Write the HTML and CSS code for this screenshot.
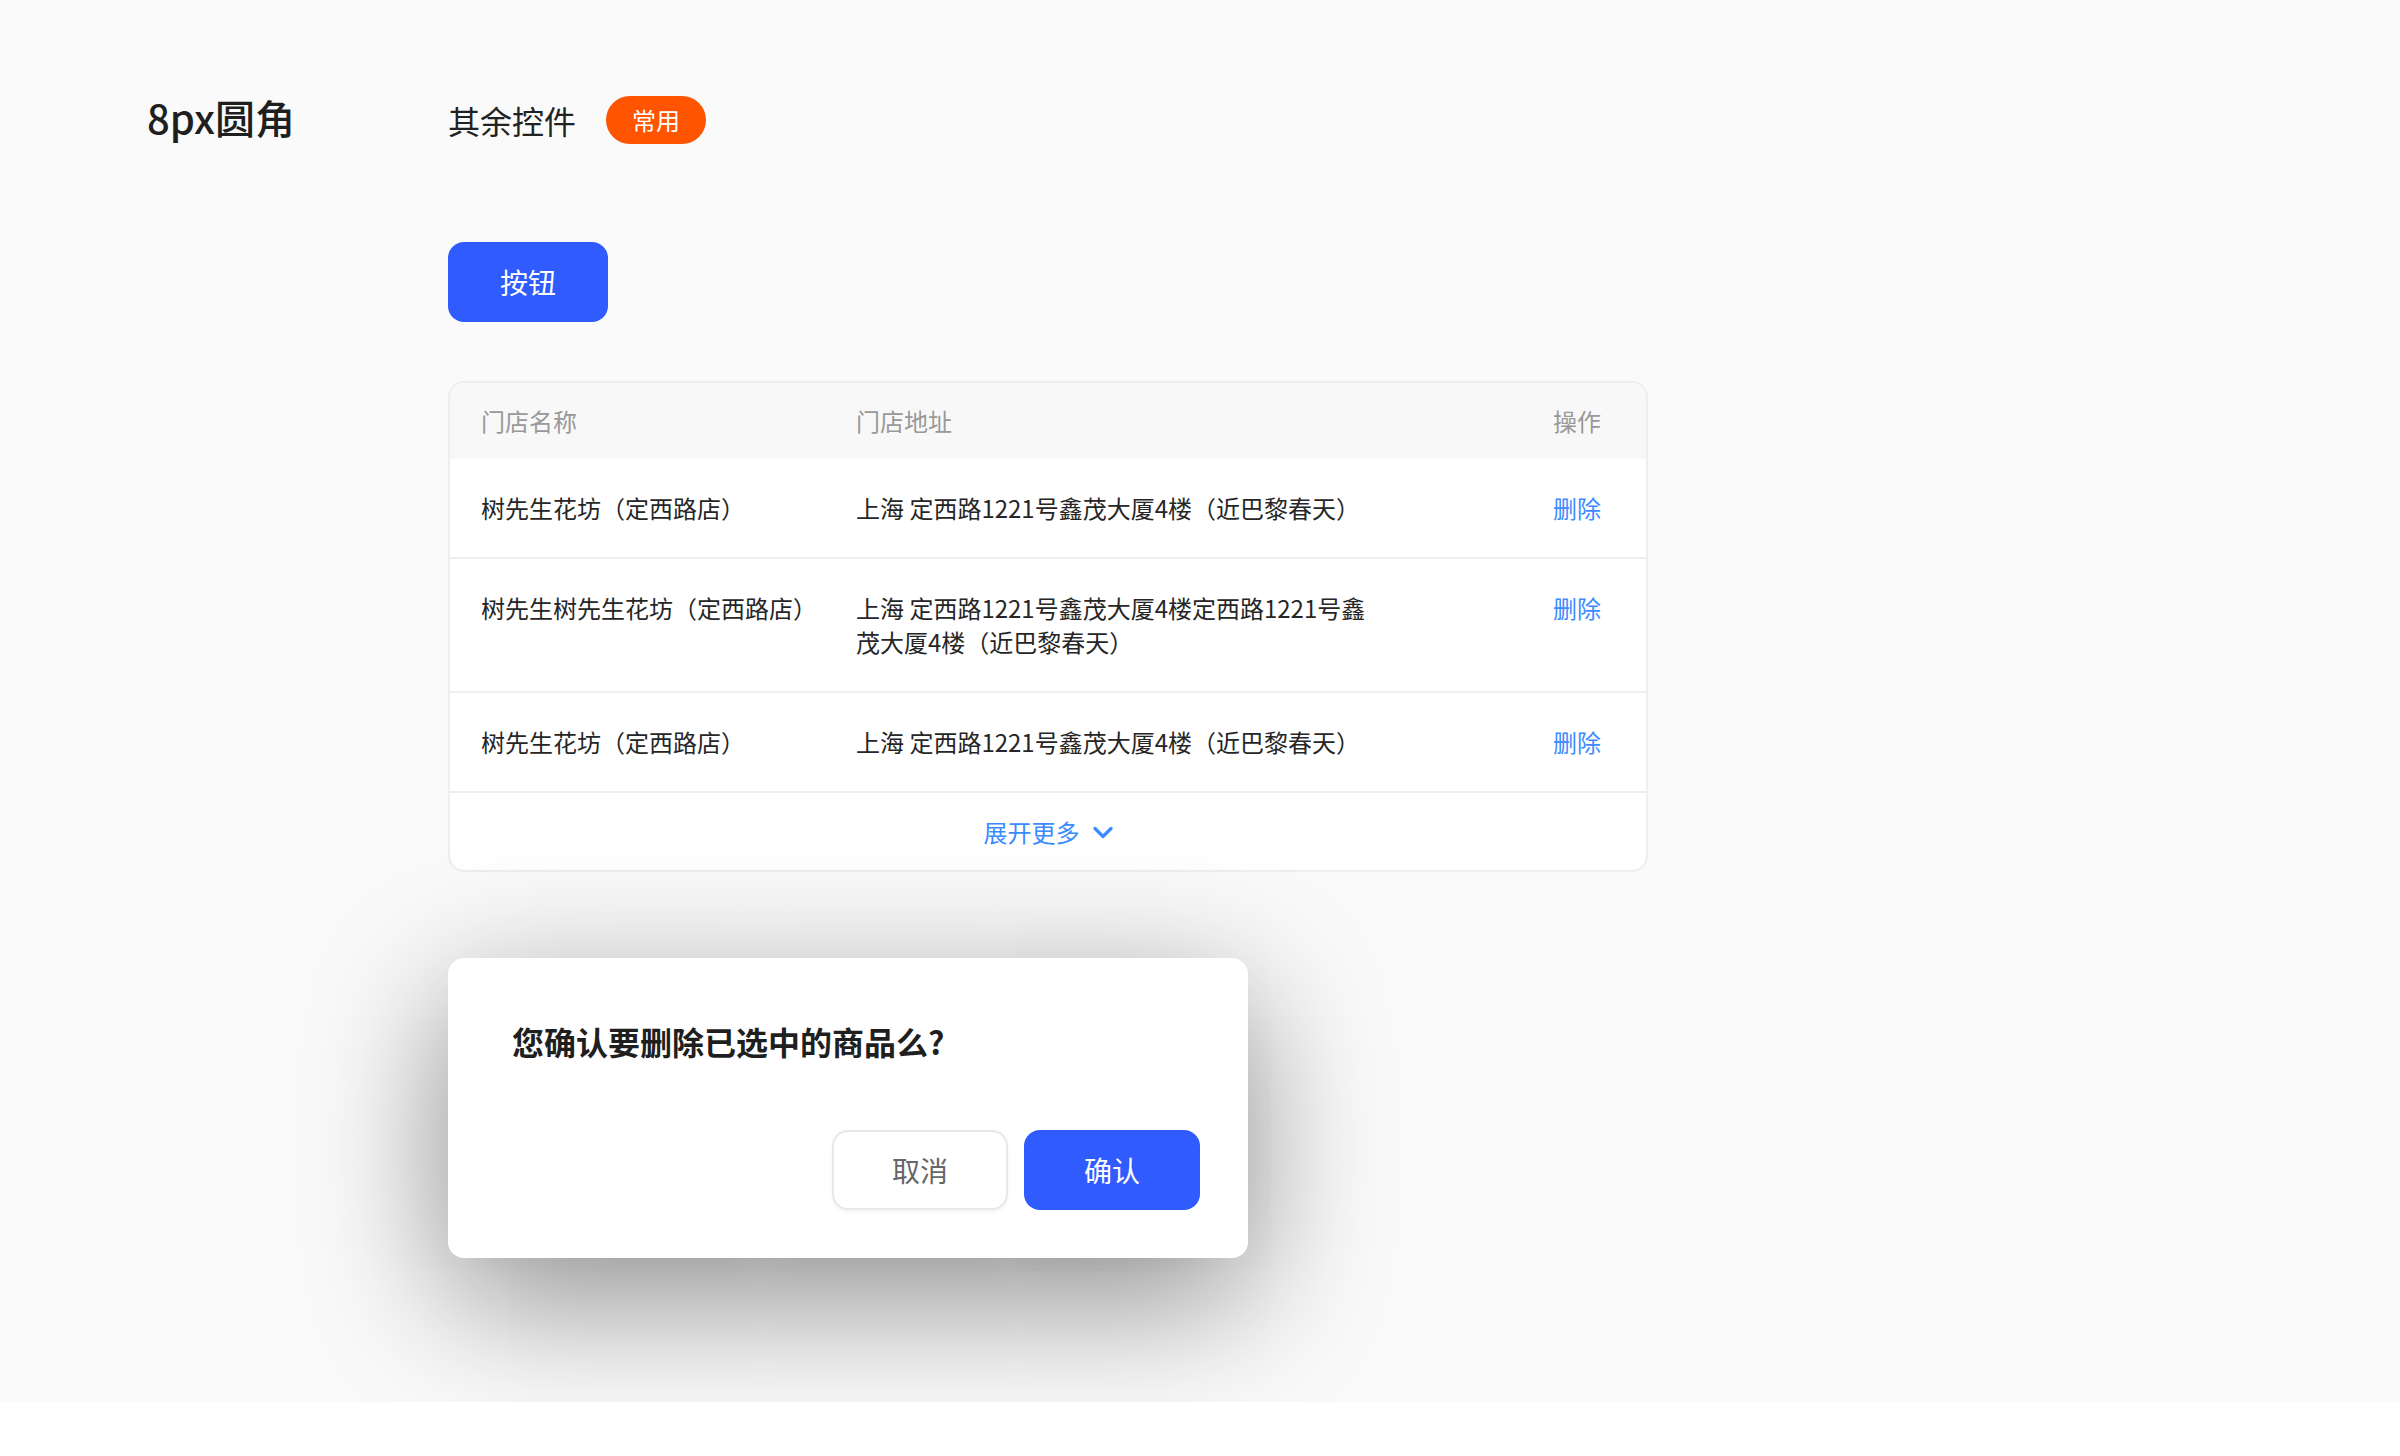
FILE: index.html
```html
<!DOCTYPE html>
<html lang="zh-CN">
<head>
<meta charset="utf-8">
<title>8px圆角</title>
<link rel="stylesheet" href="styles.css">
</head>
<body>
<div class="page">
  <div class="side">
    <h1 class="title">8px圆角</h1>
  </div>
  <div class="main">
    <div class="head">
      <span class="head-text">其余控件</span>
      <span class="badge">常用</span>
    </div>
    <button class="btn-primary btn-main">按钮</button>
    <div class="table">
      <div class="row row-head">
        <div class="c1">门店名称</div>
        <div class="c2">门店地址</div>
        <div class="c3">操作</div>
      </div>
      <div class="row">
        <div class="c1">树先生花坊（定西路店）</div>
        <div class="c2">上海 定西路1221号鑫茂大厦4楼（近巴黎春天）</div>
        <div class="c3 link">删除</div>
      </div>
      <div class="row">
        <div class="c1">树先生树先生花坊（定西路店）</div>
        <div class="c2">上海 定西路1221号鑫茂大厦4楼定西路1221号鑫茂大厦4楼（近巴黎春天）</div>
        <div class="c3 link">删除</div>
      </div>
      <div class="row">
        <div class="c1">树先生花坊（定西路店）</div>
        <div class="c2">上海 定西路1221号鑫茂大厦4楼（近巴黎春天）</div>
        <div class="c3 link">删除</div>
      </div>
      <div class="more">
        <span class="link">展开更多</span>
        <svg class="chev" width="20" height="13" viewBox="0 0 20 13"><polyline points="2,2.5 10,10.5 18,2.5" fill="none" stroke="#3a8bff" stroke-width="3.2" stroke-linecap="round" stroke-linejoin="round"/></svg>
      </div>
    </div>
    <div class="dialog">
      <div class="dialog-title">您确认要删除已选中的商品么?</div>
      <div class="dialog-actions">
        <button class="btn-cancel">取消</button>
        <button class="btn-primary btn-ok">确认</button>
      </div>
    </div>
  </div>
</div>
</body>
</html>
```

FILE: styles.css
```css
* { box-sizing: border-box; }
html, body { margin: 0; padding: 0; background: #ffffff; }
body {
  font-family: "Noto Sans CJK SC", "Noto Sans", sans-serif;
  color: #262626;
}
.page {
  height: 1402px;
  background: #fafafa;
  display: flex;
  padding: 96px 0 0 147px;
}
.side { width: 301px; flex: none; }
.title {
  margin: 0;
  font-size: 40px;
  font-weight: 500;
  line-height: 42px;
  color: #1f1f1f;
}
.main { width: 1200px; display: flex; flex-direction: column; align-items: flex-start; }
.head { display: flex; align-items: center; height: 48px; }
.head-text { font-size: 32px; line-height: 46px; color: #222; }
.badge {
  margin-left: 30px;
  width: 100px;
  height: 48px;
  border-radius: 24px;
  background: #ff5500;
  color: #fff;
  font-size: 24px;
  line-height: 48px;
  text-align: center;
}
.btn-primary {
  border: none;
  background: #2f5bff;
  color: #fff;
  font-family: inherit;
  font-size: 28px;
  border-radius: 16px;
  padding: 0;
}
.btn-main { margin-top: 98px; width: 160px; height: 80px; }
.table {
  margin-top: 59px;
  width: 1200px;
  border: 2px solid #eeeeee;
  border-radius: 16px;
  background: #fff;
  overflow: hidden;
}
.row {
  display: flex;
  align-items: flex-start;
  padding: 32px 45px 32px 31px;
  border-bottom: 2px solid #eeeeee;
  font-size: 24px;
  line-height: 34px;
}
.row-head {
  background: #f8f8f8;
  padding-top: 21px;
  padding-bottom: 21px;
  border-bottom: none;
  color: #999;
}
.c1 { width: 375px; flex: none; }
.c2 { width: 520px; flex: none; }
.c3 { margin-left: auto; }
.link { color: #3a8bff; }
.more {
  height: 77px;
  display: flex;
  align-items: center;
  justify-content: center;
  gap: 13px;
  font-size: 24px;
  line-height: 34px;
}
.chev { display: block; margin-top: 1px; }
.dialog {
  margin-top: 86px;
  width: 800px;
  height: 300px;
  background: #fff;
  border-radius: 16px;
  box-shadow: 0 40px 140px rgba(0, 0, 0, 0.45);
  padding: 61px 48px 48px 64px;
  display: flex;
  flex-direction: column;
}
.dialog-title {
  font-size: 32px;
  font-weight: 600;
  line-height: 44px;
  color: #1f1f1f;
}
.dialog-actions {
  margin-top: auto;
  display: flex;
  justify-content: flex-end;
  gap: 16px;
}
.btn-cancel {
  width: 176px;
  height: 80px;
  border: 2px solid #e8e8e8;
  border-radius: 16px;
  background: #fff;
  color: #666;
  font-family: inherit;
  font-size: 28px;
  box-shadow: 0 2px 4px rgba(0, 0, 0, 0.05);
}
.btn-ok { width: 176px; height: 80px; }
```
